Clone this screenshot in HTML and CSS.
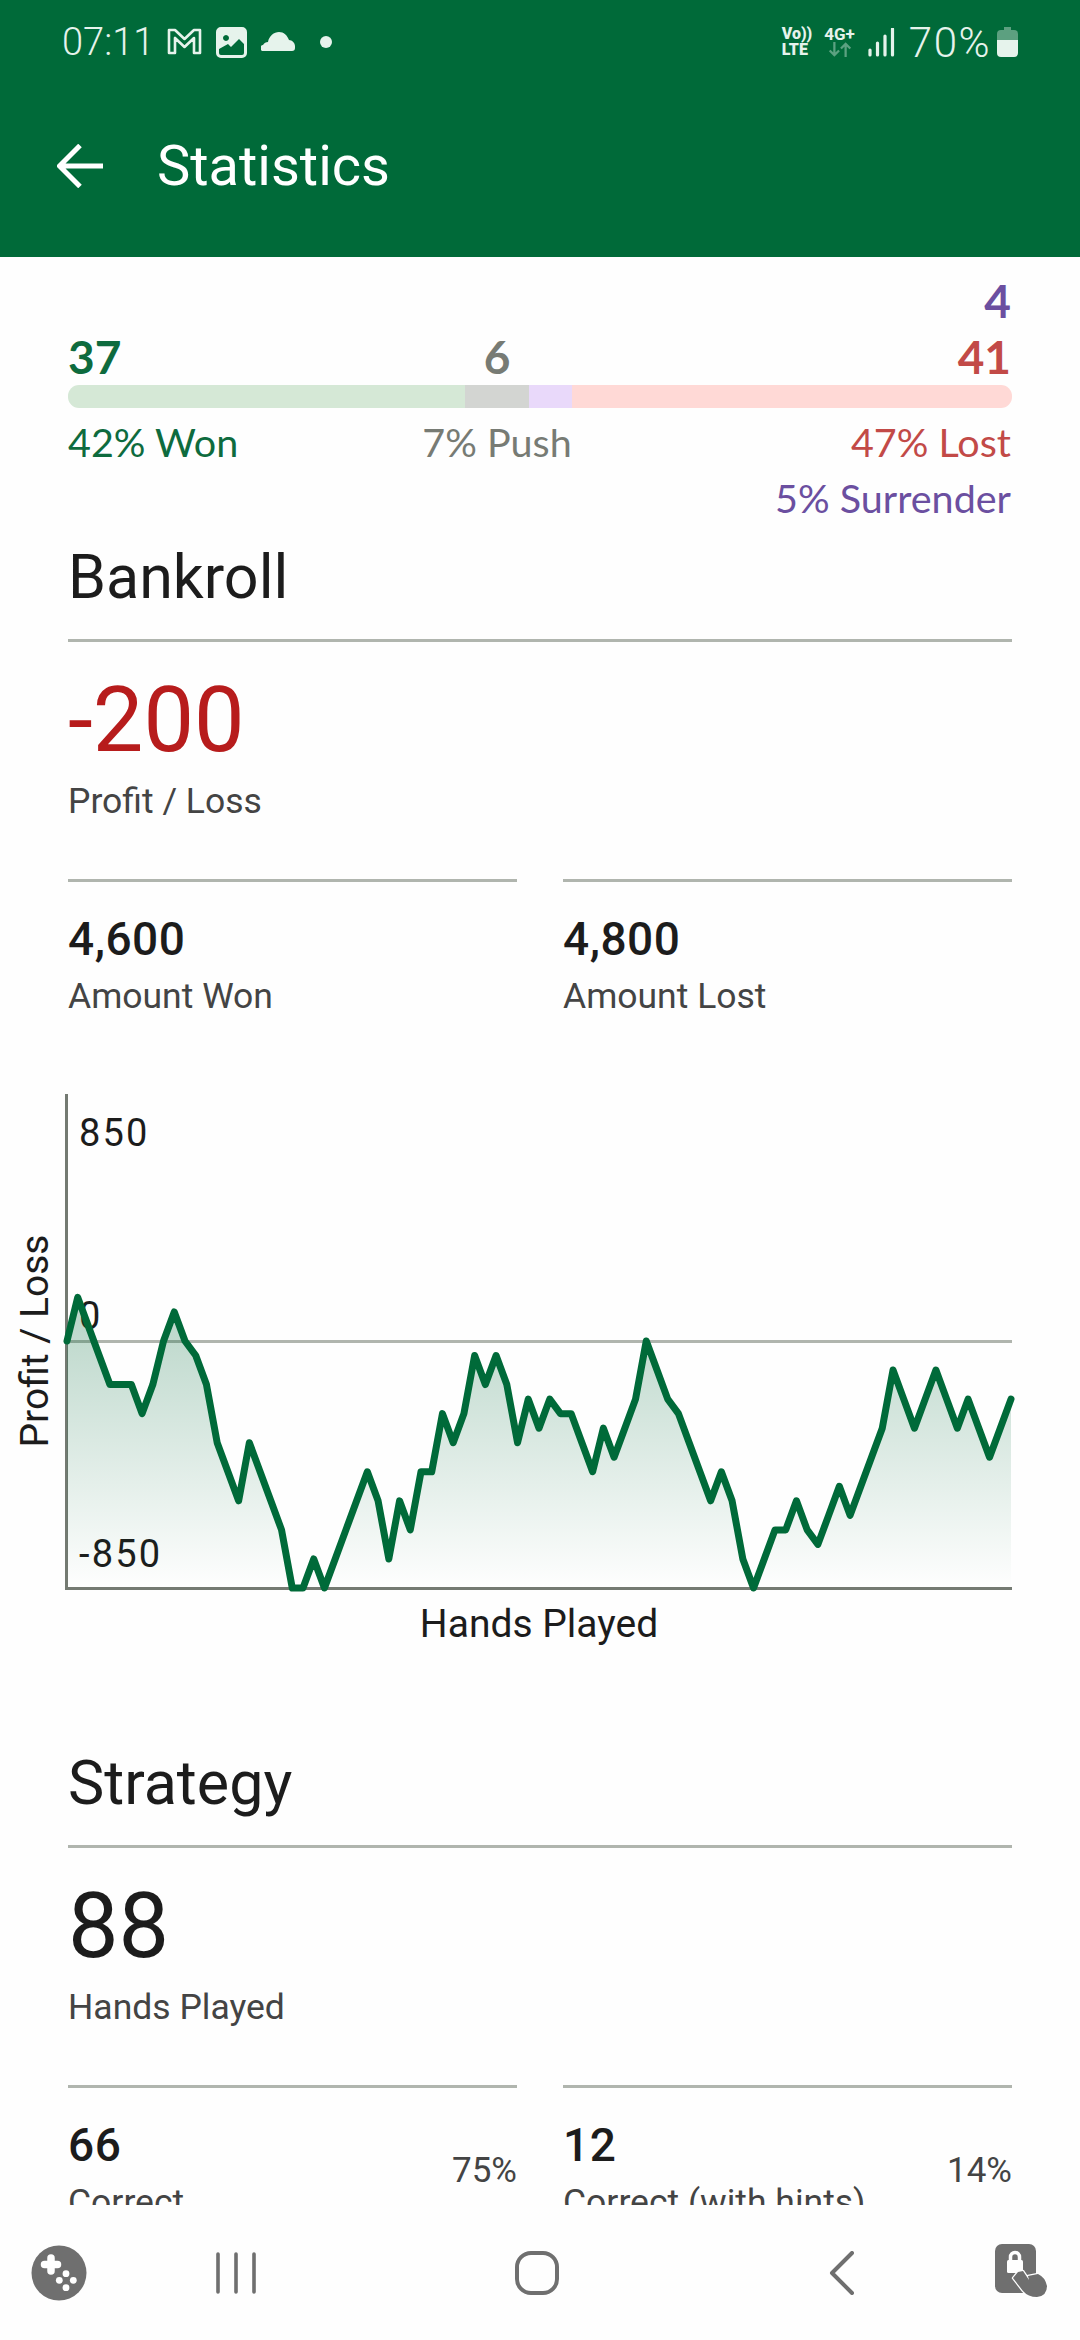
FILE: index.html
```html
<!DOCTYPE html>
<html lang="en">
<head>
<meta charset="utf-8">
<title>Statistics</title>
<link rel="stylesheet" href="styles.css">
</head>
<body>
<div class="app">
  <header class="header">
    <div class="status">
      <span class="time">07:11</span>
      <svg class="ic-m" viewBox="0 0 35 27"><path d="M2 2h6l9.500 9L27 2h6v23h-6V10l-9.500 9L8 10v15H2z" fill="none" stroke="currentColor" stroke-width="2.600" stroke-linejoin="round"/></svg>
      <svg class="ic-pic" viewBox="0 0 31 31"><path fill-rule="evenodd" d="M5 0h21a5 5 0 0 1 5 5v21a5 5 0 0 1-5 5H5a5 5 0 0 1-5-5V5a5 5 0 0 1 5-5zM10 8a3 3 0 1 0 .01 0zM3 22v4a2 2 0 0 0 2 2h21a2 2 0 0 0 2-2v-9l-5-5-8 8-3-3z" fill="currentColor"/></svg>
      <svg class="ic-cloud" viewBox="0 0 35 19"><path d="M3 19a3 3 0 0 1-1-6c1-2 3-3 5-3 1-6 6-10 11-10 5 0 8 3 10 8 3 0 6 3 6 6v2a3 3 0 0 1-3 3z" fill="currentColor"/></svg>
      <span class="dot"></span>
      <span class="status-gap"></span>
      <span class="volte"><b>Vo))</b><b>LTE</b></span>
      <span class="net">
        <b>4G+</b>
        <svg class="ic-arrows" viewBox="0 0 26 16"><path d="M7 0v14M2 9l5 5 5-5M19 16V2M14 7l5-5 5 5" fill="none" stroke="currentColor" stroke-width="2.400"/></svg>
      </span>
      <svg class="ic-signal" viewBox="0 0 28 29"><path d="M3 22v5M10.500 15v12M18 8v19M25.500 1v26" stroke="currentColor" stroke-width="3.200" stroke-linecap="round" fill="none"/></svg>
      <span class="pct">70%</span>
      <svg class="ic-batt" viewBox="0 0 21 30"><path d="M7 0h7v3h3a4 4 0 0 1 4 4v6H0V7a4 4 0 0 1 4-4h3z" fill="currentColor" opacity=".4"/><path d="M0 13h21v13a4 4 0 0 1-4 4H4a4 4 0 0 1-4-4z" fill="currentColor"/></svg>
    </div>
    <div class="appbar">
      <svg class="ic-back" viewBox="0 0 46 44"><path d="M46 22H3M23 1.500 2.500 22 23 42.500" fill="none" stroke="#fff" stroke-width="5"/></svg>
      <h1 class="title">Statistics</h1>
    </div>
  </header>

  <main class="main">
    <section class="summary">
      <div class="count-extra purple">4</div>
      <div class="tally">
        <span class="count green">37</span>
        <span class="count grey">6</span>
        <span></span>
        <span class="count red end">41</span>
      </div>
      <div class="bar">
        <span class="seg seg-won"></span>
        <span class="seg seg-push"></span>
        <span class="seg seg-surr"></span>
        <span class="seg seg-lost"></span>
      </div>
      <div class="tally pcts">
        <span class="pctl green">42% Won</span>
        <span class="pctl grey">7% Push</span>
        <span></span>
        <span class="pctl red end">47% Lost</span>
      </div>
      <div class="pct-extra purple">5% Surrender</div>
    </section>

    <h2 class="section-title first">Bankroll</h2>
    <div class="stat-big red-strong">-200</div>
    <div class="stat-label">Profit / Loss</div>
    <div class="pair">
      <div class="cell"><div class="stat-mid">4,600</div><div class="stat-label tight">Amount Won</div></div>
      <div class="cell"><div class="stat-mid">4,800</div><div class="stat-label tight">Amount Lost</div></div>
    </div>

    <svg class="chart" viewBox="0 1090 1080 560" width="1080" height="560">
      <defs>
        <linearGradient id="area" x1="0" y1="0" x2="0" y2="1">
          <stop offset="0" stop-color="#006a39" stop-opacity=".28"/>
          <stop offset="1" stop-color="#006a39" stop-opacity="0"/>
        </linearGradient>
      </defs>
      <rect class="grid-line" x="67" y="1339" width="945" height="3"/>
      <rect class="axis-line" x="65" y="1093" width="3" height="496"/>
      <rect class="axis-line" x="67" y="1586" width="945" height="3"/>
      <text class="tick" x="79" y="1145">850</text>
      <text class="tick" x="79" y="1328">0</text>
      <text class="tick" x="79" y="1566">-850</text>
      <text class="axis-title" x="539" y="1636" text-anchor="middle">Hands Played</text>
      <text class="axis-title" transform="translate(48 1340) rotate(-90)" text-anchor="middle" x="0" y="0">Profit / Loss</text>
      <svg x="67" y="1296.400" width="944" height="290.600" viewBox="0 -3 88 20" preserveAspectRatio="none" overflow="visible">
        <polygon fill="url(#area)" points="0,17 0,0 1,-3 2,-1 3,1 4,3 5,3 6,3 7,5 8,3 9,0 10,-2 11,0 12,1 13,3 14,7 15,9 16,11 17,7 18,9 19,11 20,13 21,17 22,17 23,15 24,17 25,15 26,13 27,11 28,9 29,11 30,15 31,11 32,13 33,9 34,9 35,5 36,7 37,5 38,1 39,3 40,1 41,3 42,7 43,4 44,6 45,4 46,5 47,5 48,7 49,9 50,6 51,8 52,6 53,4 54,0 55,2 56,4 57,5 58,7 59,9 60,11 61,9 62,11 63,15 64,17 65,15 66,13 67,13 68,11 69,13 70,14 71,12 72,10 73,12 74,10 75,8 76,6 77,2 78,4 79,6 80,4 81,2 82,4 83,6 84,4 85,6 86,8 87,6 88,4 88,17"/>
        <polyline class="plot" points="0,0 1,-3 2,-1 3,1 4,3 5,3 6,3 7,5 8,3 9,0 10,-2 11,0 12,1 13,3 14,7 15,9 16,11 17,7 18,9 19,11 20,13 21,17 22,17 23,15 24,17 25,15 26,13 27,11 28,9 29,11 30,15 31,11 32,13 33,9 34,9 35,5 36,7 37,5 38,1 39,3 40,1 41,3 42,7 43,4 44,6 45,4 46,5 47,5 48,7 49,9 50,6 51,8 52,6 53,4 54,0 55,2 56,4 57,5 58,7 59,9 60,11 61,9 62,11 63,15 64,17 65,15 66,13 67,13 68,11 69,13 70,14 71,12 72,10 73,12 74,10 75,8 76,6 77,2 78,4 79,6 80,4 81,2 82,4 83,6 84,4 85,6 86,8 87,6 88,4"/>
      </svg>
    </svg>

    <h2 class="section-title second">Strategy</h2>
    <div class="stat-big">88</div>
    <div class="stat-label">Hands Played</div>
    <div class="pair">
      <div class="cell split">
        <div><div class="stat-mid">66</div><div class="stat-label tight">Correct</div></div>
        <span class="share">75%</span>
      </div>
      <div class="cell split">
        <div><div class="stat-mid">12</div><div class="stat-label tight">Correct (with hints)</div></div>
        <span class="share">14%</span>
      </div>
    </div>
  </main>

  <nav class="nav">
    <svg class="ic-game" viewBox="0 0 56 56"><circle cx="28" cy="28" r="27.500" fill="#6f6f6f"/><path d="M20 13v13M13.500 19.500h13" stroke="#fff" stroke-width="7.500" stroke-linecap="round"/><circle cx="35" cy="28.700" r="3.400" fill="#fff"/><circle cx="28.300" cy="35.300" r="3.400" fill="#fff"/><circle cx="42.300" cy="35.300" r="3.400" fill="#fff"/><circle cx="35" cy="42.700" r="3.400" fill="#fff"/></svg>
    <svg class="ic-recent" viewBox="0 0 40 42"><path d="M2 2v38M20 2v38M38 2v38" stroke="#6f6f6f" stroke-width="3.600" stroke-linecap="round"/></svg>
    <svg class="ic-home" viewBox="0 0 44 44"><rect x="2" y="2" width="40" height="40" rx="14" fill="none" stroke="#6f6f6f" stroke-width="4"/></svg>
    <svg class="ic-chev" viewBox="0 0 26 44"><path d="M23 2 3 22l20 20" fill="none" stroke="#6f6f6f" stroke-width="4" stroke-linecap="round" stroke-linejoin="round"/></svg>
    <svg class="ic-lock" viewBox="0 0 54 54"><rect x="0" y="0" width="41" height="49" rx="7" fill="#6f6f6f"/><path d="M15.500 18v-5a4.500 4.500 0 0 1 9 0v5" fill="none" stroke="#fff" stroke-width="3.500"/><rect x="12" y="16" width="16" height="13" rx="1.500" fill="#fff"/><path d="M23 28l5-1 6 9-1-4 10-2q7 3 9 12 0 10-10 11-9 0-14-6L18 34z" fill="#6f6f6f" stroke="#fff" stroke-width="2.500" stroke-linejoin="round" paint-order="stroke"/></svg>
  </nav>
</div>
</body>
</html>
```
FILE: styles.css
```css
* { box-sizing: border-box; }
html, body { margin: 0; padding: 0; }
body { background: #fefefe; font-family: Roboto, sans-serif; color: #1c1c1c; }
.app { width: 1080px; height: 2340px; display: flex; flex-direction: column; overflow: hidden; }

.header { height: 257px; background: #006a39; flex: none; color: #e6f3ec; }
.status { height: 84px; padding: 0 62px 0 62px; display: flex; align-items: center; }
.time { font-size: 38px; font-weight: 300; width: 105px; }
.ic-m { width: 35px; height: 27px; margin-top: -1px; }
.ic-pic { width: 31px; height: 31px; margin-left: 14px; }
.ic-cloud { width: 35px; height: 19px; margin-left: 14px; margin-top: -2px; }
.dot { width: 12px; height: 12px; border-radius: 50%; background: currentColor; margin-left: 24px; }
.status-gap { flex: 1; }
.volte { display: flex; flex-direction: column; font-size: 16px; line-height: 16px; font-weight: 700; margin-right: 12px; }
.net { display: flex; flex-direction: column; align-items: center; font-size: 17px; line-height: 15px; margin-right: 12px; }
.ic-arrows { width: 26px; height: 15px; opacity: .4; }
.ic-signal { width: 28px; height: 29px; margin-right: 14px; }
.pct { font-size: 42px; font-weight: 300; letter-spacing: 1.500px; margin-right: 6px; }
.ic-batt { width: 21px; height: 30px; }

.appbar { height: 173px; padding: 0 0 10px 57px; display: flex; align-items: center; }
.ic-back { width: 46px; height: 44px; flex: none; }
.title { margin: 0 0 0 54px; font-size: 56px; font-weight: 400; color: #fff; line-height: 66px; }

.main { flex: 1; min-height: 0; overflow: hidden; padding: 0 68px; }

.summary { padding-top: 16px; }
.count-extra, .count { font-family: Lato, sans-serif; font-weight: 700; font-size: 46px; line-height: 56px; }
.count-extra { text-align: right; padding-right: 1px; }
.tally { display: grid; grid-template-columns: 397px 64px 43px 1fr; }
.tally > * { display: flex; justify-content: center; white-space: nowrap; }
.tally > :first-child { justify-content: flex-start; }
.tally > .end { justify-content: flex-end; padding-right: 1px; }
.bar { display: flex; height: 23px; border-radius: 11px; overflow: hidden; }
.seg { display: block; }
.seg-won { width: 397px; background: #d5e8d6; }
.seg-push { width: 64px; background: #d3d5d2; }
.seg-surr { width: 43px; background: #e9d9fa; }
.seg-lost { flex: 1; background: #ffd9d6; }
.pcts { margin-top: 6px; }
.pctl, .pct-extra { font-family: Lato, sans-serif; font-size: 39.500px; line-height: 56px; }
.pct-extra { text-align: right; padding-right: 1px; }
.green { color: #0e6b3e; }
.grey { color: #777b74; }
.red { color: #c24a47; }
.purple { color: #6b4fa0; }

.section-title { margin: 0; font-size: 61px; font-weight: 400; line-height: 70px; padding-bottom: 27px; border-bottom: 3px solid #b0b5ae; color: #1c1c1c; }
.section-title.first { margin-top: 16px; }
.section-title.second { margin-top: 97px; }
.stat-big { font-size: 90px; line-height: 106px; margin-top: 26px; }
.red-strong { color: #b71c1c; }
.stat-label { font-size: 35.500px; line-height: 42px; color: #444; margin-top: 6px; }
.pair { display: grid; grid-template-columns: 1fr 1fr; column-gap: 46px; margin-top: 57px; }
.cell { border-top: 3px solid #b0b5ae; padding-top: 29px; }
.split { display: flex; justify-content: space-between; align-items: center; }
.stat-mid { font-size: 46px; font-weight: 500; line-height: 56px; color: #1c1c1c; letter-spacing: .5px; }
.stat-label.tight { margin-top: 8px; }
.share { font-size: 35px; color: #444; }

.chart { display: block; margin: 74px -68px 0; }
.grid-line { fill: #b0b5ae; }
.axis-line { fill: #747a72; }
.tick { font-family: Roboto, sans-serif; font-size: 38px; fill: #1c1c1c; letter-spacing: 2.200px; }
.axis-title { font-family: Roboto, sans-serif; font-size: 39px; fill: #1c1c1c; }
.plot { fill: none; stroke: #006a39; stroke-width: 7px; stroke-linejoin: round; stroke-linecap: round; vector-effect: non-scaling-stroke; }

.nav { height: 135px; flex: none; background: #fefefe; padding: 0 0 0 31px; display: flex; align-items: center; }
.ic-game { width: 56px; height: 56px; }
.ic-recent { width: 40px; height: 42px; margin-left: 129px; }
.ic-home { width: 44px; height: 44px; margin-left: 259px; }
.ic-chev { width: 26px; height: 44px; margin-left: 270px; }
.ic-lock { width: 54px; height: 54px; margin-left: 140px; margin-bottom: 3px; }
```
